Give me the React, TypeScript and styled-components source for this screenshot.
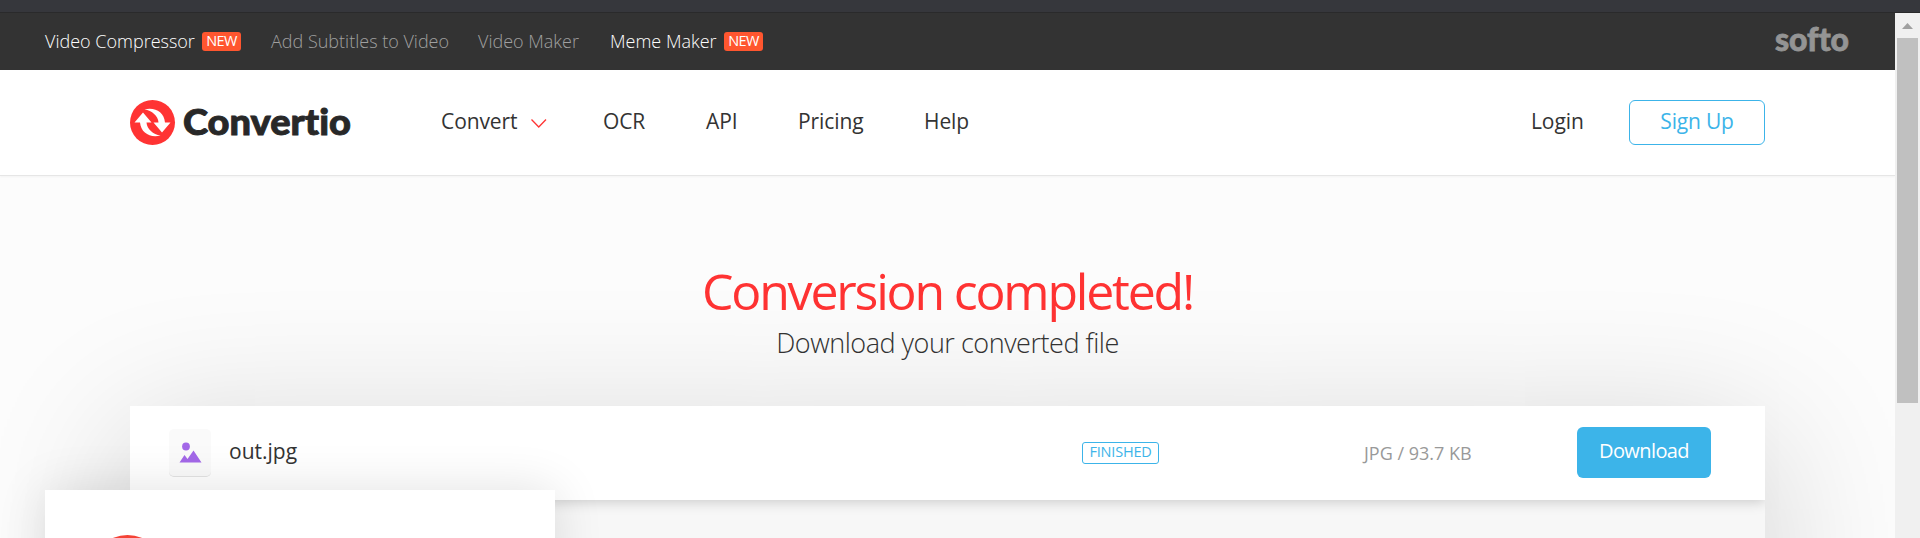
import React from "react";
import styled, { createGlobalStyle } from "styled-components";

const Global = createGlobalStyle`
  * { box-sizing: border-box; }
  body { margin: 0; background: #fcfcfc; font-family: "Open Sans", "Noto Sans", sans-serif; overflow: hidden; }
`;
const Screen = styled.div`height: 538px; display: flex; flex-direction: column; overflow: hidden; position: relative;`;
const Strip = styled.div`height: 13px; flex: none; background: #36373c; border-bottom: 1px solid #2a2a2b;`;
const Body = styled.div`flex: 1; min-height: 0; display: flex;`;
const Page = styled.div`width: 1895px; display: flex; flex-direction: column; overflow: hidden;`;
const TopBar = styled.div`
  height: 57px; flex: none; background: #333; padding: 0 46px 2px 45px;
  display: flex; align-items: center; justify-content: space-between;
`;
const Row = styled.div`display: flex; align-items: center;`;
const TopLink = styled.a<{ $bright?: boolean; $w: number }>`
  color: ${p => (p.$bright ? "#fff" : "#a0a0a0")}; font-size: 18px; font-weight: 300; line-height: 24px;
  width: ${p => p.$w}px; white-space: nowrap;
`;
const New = styled.span<{ $gap: number }>`
  width: 39px; height: 19px; margin-top: 2px; border-radius: 3px; background: #ff562f; color: #fff;
  font-size: 14.5px; line-height: 17px; text-align: center; letter-spacing: -0.6px; margin-right: ${p => p.$gap}px;
`;
const SoftoMark = styled.svg`display: block; overflow: visible;`;
const Wordmark = styled.text`
  font-family: Lato, sans-serif; font-weight: 900; font-variant-ligatures: none;
`;
const Header = styled.header`
  height: 106px; flex: none; background: #fff; border-bottom: 1px solid #e6e6e6; padding: 0 130px;
  box-shadow: 0 1px 2px rgba(0, 0, 0, 0.04);
  display: flex; align-items: center; justify-content: space-between;
`;
const Nav = styled.nav`display: flex; align-items: center; margin-left: 89px;`;
const NavLink = styled.a<{ $w: number }>`
  font-size: 21px; line-height: 30px; color: #333; width: ${p => p.$w}px; white-space: nowrap;
  padding-bottom: 3px; letter-spacing: -0.1px;
`;
const Chevron = styled.svg`display: block; margin-left: 2px;`;
const SignUp = styled.button`
  width: 136px; height: 45px; border: 1px solid #3cb4e9; border-radius: 6px; background: #fff; color: #3cb4e9;
  font: 400 21px/30px "Open Sans", sans-serif; padding: 0 0 3px; letter-spacing: -0.2px;
`;
const Main = styled.main`flex: 1; display: flex; flex-direction: column; align-items: center; padding-top: 81px;`;
const Title = styled.h1`
  margin: 0; font-size: 50px; line-height: 68px; font-weight: 400; color: #f33; letter-spacing: -2.2px; white-space: nowrap;
`;
const Subtitle = styled.p`
  margin: 0; font-size: 27px; line-height: 36px; font-weight: 300; color: #333; white-space: nowrap; letter-spacing: -0.47px;
`;
const Panel = styled.section`
  width: 1635px; height: 400px; flex: none; margin-top: 45px; background: #f7f7f7;
  box-shadow: 0 30px 150px rgba(0, 0, 0, 0.19);
`;
const FileRow = styled.div`
  height: 94px; background: #fff; box-shadow: 0 2px 12px rgba(0, 0, 0, 0.18); clip-path: inset(0 0 -20px 0);
  display: grid; grid-template-columns: 60px 853px 282px 213px 134px; padding-left: 39px; align-items: center;
`;
const FileIcon = styled.div`
  width: 42px; height: 48px; border-radius: 5px; background: #fafafa; border-bottom: 1px solid #e3e3e3;
  display: flex; align-items: center; justify-content: center;
`;
const FileName = styled.span`font-size: 21px; line-height: 30px; color: #333; padding-bottom: 5px;`;
const Status = styled.span`
  width: 77px; height: 22px; border: 1px solid #3cb4e9; border-radius: 3px; color: #3cb4e9;
  font-size: 14.5px; line-height: 18px; text-align: center; letter-spacing: -0.2px;
`;
const Size = styled.span`font-size: 18px; line-height: 24px; color: #999; white-space: nowrap;`;
const Download = styled.button`
  height: 51px; margin-bottom: 1px; border: 0; border-radius: 6px; background: #3cb4e9; color: #fff; padding: 0 0 4px;
  font: 500 20px/28px "Open Sans", sans-serif; letter-spacing: -0.6px;
`;
const Popup = styled.aside`
  position: absolute; left: 45px; top: 490px; width: 510px; height: 120px; background: #fff;
  box-shadow: 0 0 50px rgba(0, 0, 0, 0.12); padding: 45px 0 0 46px;
`;
const Scrollbar = styled.div`
  width: 25px; background: #f0f0f0; display: flex; flex-direction: column; align-items: center;
`;
const Arrow = styled.svg`display: block; width: 25px; height: 25px;`;
const Thumb = styled.div`width: 21px; height: 365px; background: #c0c0c0;`;

const Logo = () => (
  <svg width="222" height="46" viewBox="0 0 222 46">
    <circle cx="22.5" cy="22.5" r="22.5" fill="#f33" />
    <g fill="#fff">
      <path d="M14.500 9.500C25 7 34 12 35 22.500H40.500L32 32.500L23.500 22.500H28.500C28 16 22 10.500 14.500 9.500Z" />
      <path d="M30.500 35.500C20 38 11 33 10 22.500H4.500L13 12.500L21.500 22.500H16.500C17 29 23 34.500 30.500 35.500Z" />
    </g>
    <Wordmark x="53" y="35" fontSize="36" fill="#282828" stroke="#282828" strokeWidth=".9" textLength="168" lengthAdjust="spacingAndGlyphs">Convertio</Wordmark>
  </svg>
);

export default function App() {
  return (
    <Screen>
      <Global />
      <Strip />
      <Body>
        <Page>
          <TopBar>
            <Row>
              <TopLink $bright $w={157}>Video Compressor</TopLink><New $gap={30}>NEW</New>
              <TopLink $w={207}>Add Subtitles to Video</TopLink>
              <TopLink $w={132}>Video Maker</TopLink>
              <TopLink $bright $w={114}>Meme Maker</TopLink><New $gap={0}>NEW</New>
            </Row>
            <SoftoMark width="74" height="36" viewBox="0 0 74 36">
              <Wordmark x="0" y="28" fontSize="33" fill="#949494" stroke="#949494" strokeWidth=".8" textLength="74" lengthAdjust="spacingAndGlyphs">softo</Wordmark>
            </SoftoMark>
          </TopBar>
          <Header>
            <Row>
              <Logo />
              <Nav>
                <NavLink $w={88}>Convert</NavLink>
                <Chevron width="72" height="12" viewBox="0 0 72 12" fill="none" stroke="#f33" strokeWidth="1.300"><path d="M.5 2.500l7.250 7.500 7.250-7.500" /></Chevron>
                <NavLink $w={103}>OCR</NavLink>
                <NavLink $w={92}>API</NavLink>
                <NavLink $w={126}>Pricing</NavLink>
                <NavLink $w={50}>Help</NavLink>
              </Nav>
            </Row>
            <Row><NavLink $w={98}>Login</NavLink><SignUp>Sign Up</SignUp></Row>
          </Header>
          <Main>
            <Title>Conversion completed!</Title>
            <Subtitle>Download your converted file</Subtitle>
            <Panel>
              <FileRow>
                <FileIcon>
                  <svg width="24" height="24" viewBox="0 0 24 24" fill="#a368e8"><circle cx="8" cy="5.500" r="3.900" /><path d="M1.500 21.500l5-7.500 3 4 6-8.500 8 12z" /></svg>
                </FileIcon>
                <FileName>out.jpg</FileName>
                <Status>FINISHED</Status>
                <Size>JPG / 93.7 KB</Size>
                <Download>Download</Download>
              </FileRow>
            </Panel>
          </Main>
        </Page>
        <Scrollbar>
          <Arrow viewBox="0 0 25 25"><path d="M7 16l5.500-6 5.500 6z" fill="#a0a0a0" /></Arrow>
          <Thumb />
        </Scrollbar>
      </Body>
      <Popup>
        <svg width="73" height="73" viewBox="0 0 73 73"><circle cx="36.500" cy="36.500" r="36.500" fill="#f44336" /></svg>
      </Popup>
    </Screen>
  );
}
